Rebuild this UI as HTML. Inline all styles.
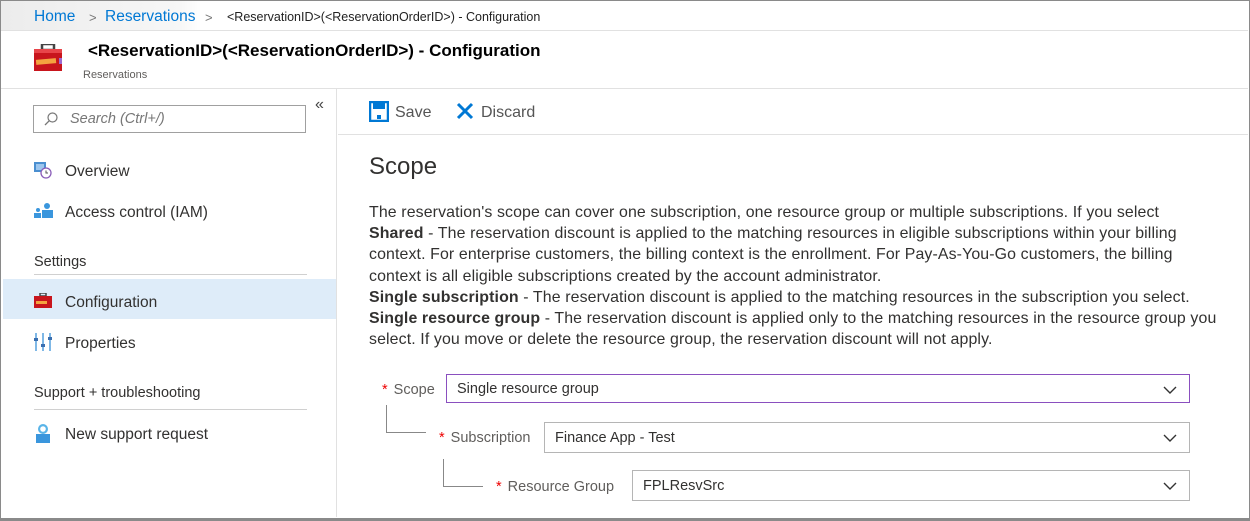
<!DOCTYPE html>
<html><head><meta charset="utf-8"><style>
*{box-sizing:border-box;margin:0;padding:0}
body{width:1250px;height:521px;background:#fff;font-family:"Liberation Sans",sans-serif;color:#323130;position:relative;overflow:hidden}
.frame{position:absolute;left:0;top:0;width:1250px;height:521px;border:1px solid #8a8a8a;border-bottom:3px solid #8a8a8a}
.bc{position:absolute;left:1px;top:1px;width:1247px;height:30px;background:linear-gradient(90deg,#ececec 0,#f7f7f7 180px,#fff 200px);border-bottom:1px solid #e1e1e1;font-size:15.5px}
.bc span{position:absolute;top:7px}
.hdr{position:absolute;left:1px;top:31px;width:1247px;height:58px;border-bottom:1px solid #e1e1e1}
.abs{position:absolute;white-space:nowrap}
.side{position:absolute;left:1px;top:89px;width:336px;height:428px;border-right:1px solid #e1e1e1}
.nav{position:absolute;left:64px;font-size:15.5px;color:#323130}
.sec{position:absolute;left:33px;font-size:14.5px;color:#323130}
.hr{position:absolute;left:33px;width:273px;height:1px;background:#d0d0d0}
.p{position:absolute;left:369px;top:202px;font-size:15.9px;letter-spacing:0.12px;line-height:21.2px;color:#323130;white-space:nowrap}
.sel{position:absolute;height:31px;border:1px solid #b5b5b5;font-size:14.5px;padding:7px 10px}
.sel svg{position:absolute;right:12px;top:11px}
.lbl{position:absolute;font-size:14.5px;color:#605e5c;white-space:nowrap}
.lbl b{color:#e00;font-weight:normal;margin-right:6px}
</style></head><body>
<div class="bc">
<span style="left:33px;color:#0078d4">Home</span>
<span style="left:88px;color:#777;font-size:13px;top:9px">&gt;</span>
<span style="left:104px;color:#0078d4">Reservations</span>
<span style="left:204px;color:#777;font-size:13px;top:9px">&gt;</span>
<span style="left:226px;font-size:12.5px;top:9px;color:#222">&lt;ReservationID&gt;(&lt;ReservationOrderID&gt;) - Configuration</span>
</div>
<div class="hdr">
<svg class="abs" style="left:31px;top:13px" width="32" height="28" viewBox="0 0 32 28"><rect x="10" y="0" width="12" height="6" fill="none" stroke="#444" stroke-width="2.5"/><rect x="2" y="5" width="28" height="22" fill="#c8151d"/><rect x="2" y="5" width="28" height="4" fill="#e8454a"/><rect x="4" y="15" width="20" height="5" fill="#f4a340" transform="rotate(-5 14 17)"/><rect x="27" y="14" width="3" height="6" fill="#9b6ad0"/></svg>
<div class="abs" style="left:87px;top:10px;font-size:17px;font-weight:bold;color:#000">&lt;ReservationID&gt;(&lt;ReservationOrderID&gt;) - Configuration</div>
<div class="abs" style="left:82px;top:38px;font-size:11px;color:#605e5c">Reservations</div>
</div>
<div class="side">
<div class="abs" style="left:32px;top:16px;width:273px;height:28px;border:1px solid #a0a0a0"></div>
<svg class="abs" style="left:42px;top:22px" width="16" height="16" viewBox="0 0 16 16"><circle cx="9.5" cy="6.5" r="4.5" fill="none" stroke="#777" stroke-width="1.2"/><path d="M6.3 9.7 2 14" stroke="#777" stroke-width="1.3"/></svg>
<div class="abs" style="left:69px;top:22px;font-size:14.5px;font-style:italic;color:#777">Search (Ctrl+/)</div>
<div class="abs" style="left:314px;top:7px;font-size:16px;color:#444">«</div>
<svg class="abs" style="left:33px;top:72px" width="18" height="18"><rect x="0" y="1" width="12" height="10" fill="#4a8fd0"/><rect x="2" y="3" width="8" height="6" fill="#9dc6ee"/><circle cx="12" cy="12" r="5" fill="#fff" stroke="#8a5db8" stroke-width="1.3"/><path d="M12 9.5V12h2" stroke="#555" stroke-width="1" fill="none"/></svg>
<div class="nav" style="top:74px">Overview</div>
<svg class="abs" style="left:33px;top:114px" width="20" height="16"><circle cx="13" cy="3" r="3" fill="#3a96dd"/><rect x="8" y="7" width="11" height="8" fill="#3a96dd"/><circle cx="4" cy="7" r="2" fill="#3a96dd"/><rect x="0" y="10" width="7" height="5" fill="#3a96dd"/></svg>
<div class="nav" style="top:115px">Access control (IAM)</div>
<div class="sec" style="top:165px">Settings</div>
<div class="hr" style="top:185px"></div>
<div class="abs" style="left:2px;top:190px;width:333px;height:40px;background:#deecf9"></div>
<svg class="abs" style="left:33px;top:204px" width="18" height="15"><rect x="6" y="0" width="6" height="3" fill="none" stroke="#444" stroke-width="1.5"/><rect x="0" y="3" width="18" height="12" fill="#c8151d"/><rect x="2" y="8" width="11" height="3" fill="#f4a340"/></svg>
<div class="nav" style="top:205px">Configuration</div>
<svg class="abs" style="left:33px;top:244px" width="18" height="18"><g fill="#7fb8e6"><rect x="1" y="0" width="2" height="18"/><rect x="8" y="0" width="2" height="18"/><rect x="15" y="0" width="2" height="18"/></g><g fill="#3a6fb0"><rect x="0" y="5" width="4" height="3"/><rect x="7" y="11" width="4" height="3"/><rect x="14" y="4" width="4" height="3"/></g></svg>
<div class="nav" style="top:246px">Properties</div>
<div class="sec" style="top:296px">Support + troubleshooting</div>
<div class="hr" style="top:320px"></div>
<svg class="abs" style="left:34px;top:334px" width="16" height="20"><circle cx="8" cy="6" r="5" fill="#59b4e8"/><circle cx="8" cy="6" r="2.8" fill="#fff"/><rect x="1" y="11" width="14" height="9" fill="#3a96dd"/></svg>
<div class="nav" style="top:337px">New support request</div>
</div>
<div class="abs" style="left:338px;top:134px;width:910px;height:1px;background:#e1e1e1"></div>
<svg class="abs" style="left:369px;top:101px" width="20" height="21" viewBox="0 0 20 21"><path d="M1 1h18v19H1z" fill="none" stroke="#0078d4" stroke-width="2.5"/><rect x="4" y="1" width="12" height="7" fill="#0078d4"/><rect x="8" y="14" width="4" height="4" fill="#0078d4"/></svg>
<div class="abs" style="left:395px;top:104px;font-size:16px;color:#555">Save</div>
<svg class="abs" style="left:456px;top:102px" width="18" height="18"><path d="M2 2 16 16M16 2 2 16" stroke="#0078d4" stroke-width="3"/></svg>
<div class="abs" style="left:481px;top:104px;font-size:16px;color:#555">Discard</div>
<div class="abs" style="left:369px;top:153px;font-size:24px;color:#323130">Scope</div>
<div class="p">The reservation's scope can cover one subscription, one resource group or multiple subscriptions. If you select<br><b>Shared</b> - The reservation discount is applied to the matching resources in eligible subscriptions within your billing<br>context. For enterprise customers, the billing context is the enrollment. For Pay-As-You-Go customers, the billing<br>context is all eligible subscriptions created by the account administrator.<br><b>Single subscription</b> - The reservation discount is applied to the matching resources in the subscription you select.<br><b>Single resource group</b> - The reservation discount is applied only to the matching resources in the resource group you<br>select. If you move or delete the resource group, the reservation discount will not apply.</div>
<div class="lbl" style="left:382px;top:382px"><b>*</b>Scope</div>
<div class="sel" style="left:446px;top:374px;width:744px;height:29px;border-color:#8a4fbf;padding-top:6px">Single resource group<svg width="14" height="8"><path d="M1 1l6 6 6-6" stroke="#333" fill="none" stroke-width="1.4"/></svg></div>
<div class="abs" style="left:386px;top:405px;width:40px;height:28px;border-left:1px solid #888;border-bottom:1px solid #888"></div>
<div class="lbl" style="left:439px;top:430px"><b>*</b>Subscription</div>
<div class="sel" style="left:544px;top:422px;width:646px">Finance App - Test<svg width="14" height="8"><path d="M1 1l6 6 6-6" stroke="#333" fill="none" stroke-width="1.4"/></svg></div>
<div class="abs" style="left:443px;top:459px;width:40px;height:28px;border-left:1px solid #888;border-bottom:1px solid #888"></div>
<div class="lbl" style="left:496px;top:479px"><b>*</b>Resource Group</div>
<div class="sel" style="left:632px;top:470px;width:558px">FPLResvSrc<svg width="14" height="8"><path d="M1 1l6 6 6-6" stroke="#333" fill="none" stroke-width="1.4"/></svg></div>
<div class="frame"></div>
</body></html>
